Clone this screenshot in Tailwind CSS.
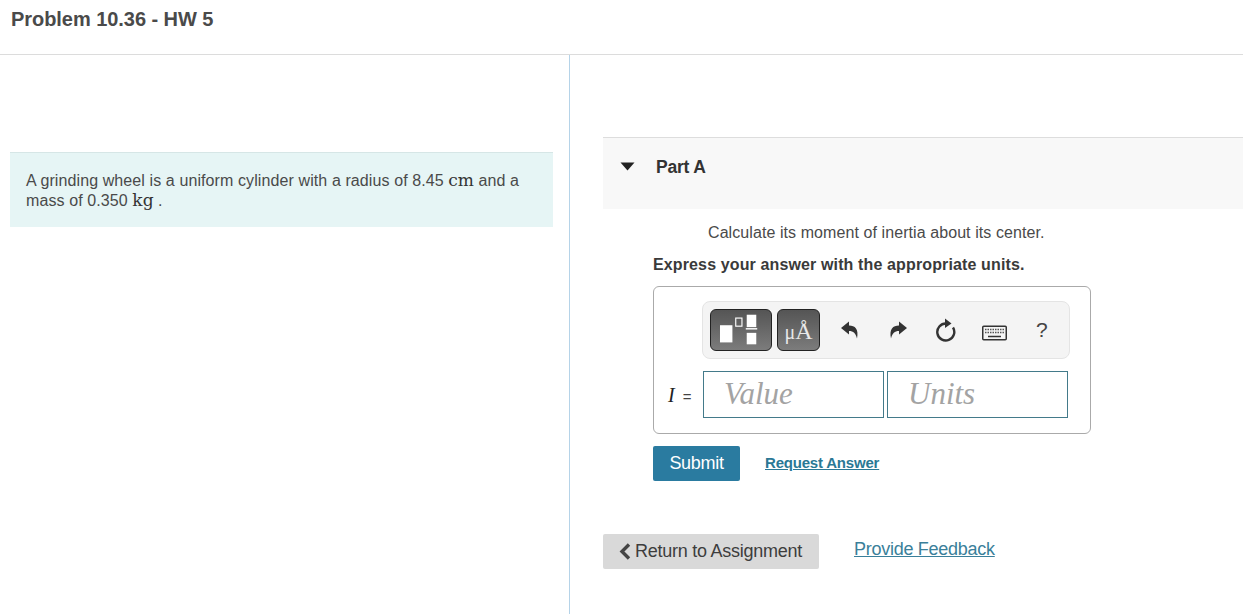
<!DOCTYPE html>
<html><head><meta charset="utf-8"><script src="https://cdn.jsdelivr.net/npm/@tailwindcss/browser@4"></script></head>
<body class="bg-white font-['Liberation_Sans',Arial,sans-serif] text-[#333] overflow-hidden">
<div class="w-[1243px] h-[614px] flex flex-col overflow-hidden">
  <header class="h-[55px] shrink-0 border-b border-[#dcdcdc] pl-[11px] pt-[7px]">
    <h1 class="text-[20px] leading-[24px] font-bold text-[#4a4a4a] tracking-[-0.05px]">Problem 10.36 - HW 5</h1>
  </header>
  <div class="flex flex-1 min-h-0">
    <section class="w-[570px] shrink-0 border-r border-[#b5d3e8] pl-[10px] pt-[97px]">
      <div class="w-[543px] h-[75px] bg-[#e6f5f5] border-t border-[#d6e6e6] pl-[16px] pt-[18px] text-[16px] leading-[20px] text-[#4a4a4a] tracking-[0.1px]">
        <p>A grinding wheel is a uniform cylinder with a radius of 8.45 <span class="font-['DejaVu_Serif',serif] text-[17px] leading-[0] tracking-normal text-[#333]">cm</span> and a<br>mass of 0.350 <span class="font-['DejaVu_Serif',serif] text-[17px] leading-[0] tracking-normal text-[#333]">kg</span> .</p>
      </div>
    </section>
    <section class="flex-1 min-w-0 pl-[33px] pt-[82px]">
      <div class="h-[72px] bg-[#f8f8f8] border-t border-[#dddddd] flex items-start">
        <svg class="ml-[17px] mt-[24px]" width="15" height="9" viewBox="0 0 15 9"><path d="M0.5 0.5H14.5L7.5 8.5Z" fill="#222"/></svg>
        <h2 class="ml-[21px] mt-[19px] text-[17.5px] leading-[20px] font-bold text-[#333] tracking-[-0.2px]">Part A</h2>
      </div>
      <div class="pl-[50px]">
        <p class="pl-[55px] mt-[14px] text-[16px] leading-[20px] text-[#4a4a4a] tracking-[0.08px]">Calculate its moment of inertia about its center.</p>
        <p class="mt-[12px] text-[16px] leading-[20px] font-bold text-[#3a3a3a] tracking-[0.13px]">Express your answer with the appropriate units.</p>
        <div class="mt-[11px] w-[438px] h-[148px] border border-[#aaaaaa] rounded-[6px] pt-[14px] pl-[48px]">
          <div class="w-[368px] h-[58px] bg-[#f4f4f4] border border-[#e4e4e4] rounded-[8px] flex items-center pl-[7px]">
            <button class="w-[62px] h-[42px] rounded-[6px] border border-[#222] bg-gradient-to-b from-[#555] to-[#7c7c7c] flex items-center justify-center">
              <svg width="42" height="34" viewBox="0 0 44 34"><rect x="0" y="12" width="13" height="18" fill="#fff"/><rect x="16.5" y="4.5" width="6.5" height="8.5" fill="none" stroke="#fff" stroke-width="1.2"/><rect x="28" y="1" width="10" height="13" fill="#fff"/><rect x="27" y="15" width="12" height="1.5" fill="#fff"/><rect x="28" y="20" width="10" height="12" fill="#fff"/></svg>
            </button>
            <button class="ml-[5px] w-[43px] h-[42px] rounded-[6px] border border-[#222] bg-gradient-to-b from-[#555] to-[#7c7c7c] font-['Liberation_Serif',serif] leading-[24px] text-[#e8e8e8] pt-[5px]"><span class="text-[20px]">μ</span><span class="text-[24px]">Å</span></button>
            <svg class="ml-[20px]" width="20" height="20" viewBox="0 0 20 20"><path d="M1 8 L9 1.5 V5.5 C15 5.5 19 9 17 18.5 C15.5 13 13.5 11 9 11 V14.5 Z" fill="#333"/></svg>
            <svg class="ml-[28px]" width="20" height="20" viewBox="0 0 20 20"><path d="M19 8 L11 1.5 V5.5 C5 5.5 1 9 3 18.5 C4.5 13 6.5 11 11 11 V14.5 Z" fill="#333"/></svg>
            <svg class="ml-[27px]" width="22" height="24" viewBox="0 0 22 24"><path d="M11 5.5 A8.5 8.5 0 1 0 18 9.5" fill="none" stroke="#333" stroke-width="2.4"/><path d="M10 0.5 L16.5 5.5 L10 10 Z" fill="#333"/></svg>
            <svg class="ml-[25px] mt-[6px]" width="25" height="16" viewBox="0 0 25 16"><rect x="0.75" y="1.25" width="23.5" height="13.5" rx="1" fill="#f4f4f4" stroke="#333" stroke-width="1.5"/><path d="M3 4.5H22M3 7.5H22" stroke="#555" stroke-width="1.5" stroke-dasharray="1.5 1"/><path d="M6 11.5H19" stroke="#333" stroke-width="1.5"/></svg>
            <span class="ml-[29px] text-[21px] leading-[24px] text-[#444]">?</span>
          </div>
          <div class="flex items-center mt-[12px] -ml-[34px]">
            <span class="w-[35px] font-['Liberation_Serif',serif] text-[17px] text-[#222] whitespace-nowrap"><i class="text-[20px]">I</i><span class="ml-[8px] font-['Liberation_Sans',sans-serif] text-[15px] text-[#444]">=</span></span>
            <div class="w-[181px] h-[47px] border border-[#437a8a] pl-[20px] font-['Liberation_Serif',serif] italic text-[31px] leading-[44px] text-[#a3a3a3]">Value</div>
            <div class="ml-[3px] w-[181px] h-[47px] border border-[#437a8a] pl-[20px] font-['Liberation_Serif',serif] italic text-[31px] leading-[44px] text-[#a3a3a3]">Units</div>
          </div>
        </div>
        <div class="flex items-center mt-[12px]">
          <button class="w-[87px] h-[35px] bg-[#2a7ba0] rounded-[2px] text-white text-[18px] leading-[33px] tracking-[-0.3px]">Submit</button>
          <a class="ml-[25px] text-[#2a7895] text-[15px] font-bold underline tracking-[-0.2px]">Request Answer</a>
        </div>
      </div>
      <div class="flex items-start mt-[53px]">
        <button class="w-[216px] h-[35px] bg-[#d9d9d9] rounded-[2px] flex items-center pl-[16px] text-[18px] text-[#3d3d3d] tracking-[-0.25px]">
          <svg class="mr-[4px]" width="12" height="17" viewBox="0 0 12 17"><path d="M10 1.5 L3 8.5 L10 15.5" fill="none" stroke="#444" stroke-width="3.4"/></svg>Return to Assignment</button>
        <a class="ml-[35px] text-[18px] leading-[30px] text-[#3a7f9a] underline tracking-[-0.27px]">Provide Feedback</a>
      </div>
    </section>
  </div>
</div>
</body></html>
